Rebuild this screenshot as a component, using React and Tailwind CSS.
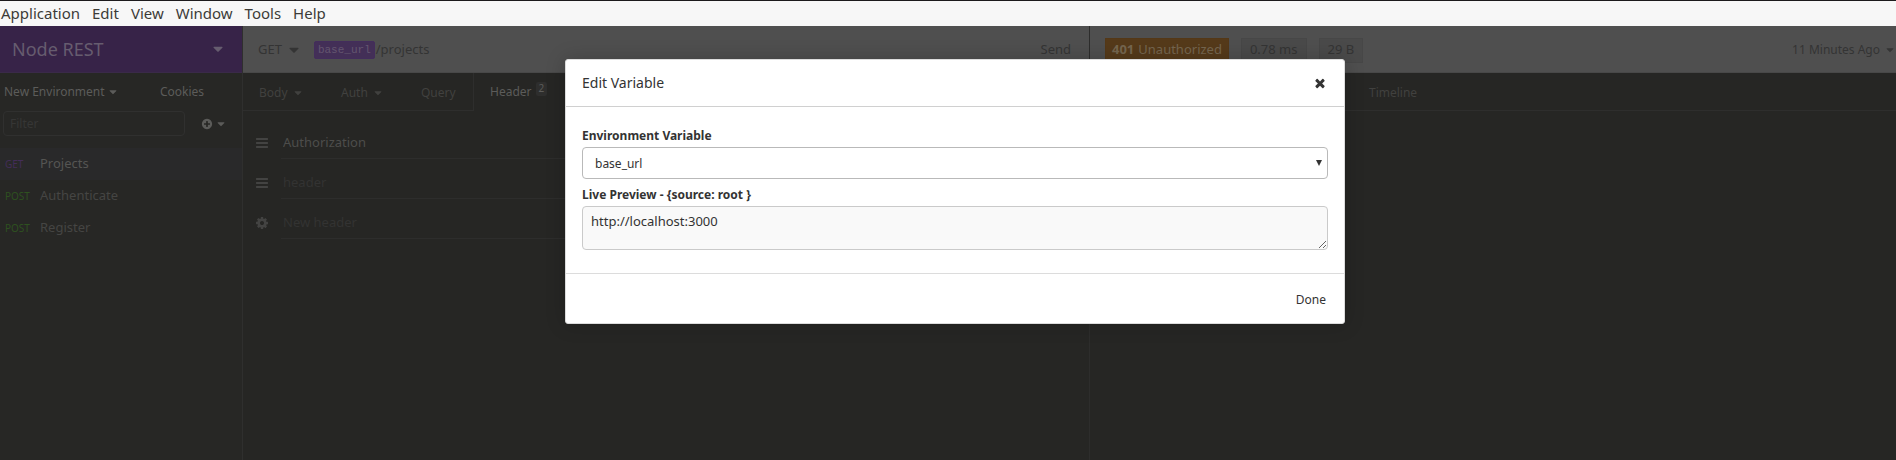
import React from "react";

const ICONS = {
  caret:
    "M1408 704q0 26-19 45l-448 448q-19 19-45 19t-45-19l-448-448q-19-19-19-45t19-45 45-19h896q26 0 45 19t19 45z",
  bars: "M1664 1344v128q0 26-19 45t-45 19h-1408q-26 0-45-19t-19-45v-128q0-26 19-45t45-19h1408q26 0 45 19t19 45zm0-512v128q0 26-19 45t-45 19h-1408q-26 0-45-19t-19-45v-128q0-26 19-45t45-19h1408q26 0 45 19t19 45zm0-512v128q0 26-19 45t-45 19h-1408q-26 0-45-19t-19-45v-128q0-26 19-45t45-19h1408q26 0 45 19t19 45z",
  cog: "M1152 896q0-106-75-181t-181-75-181 75-75 181 75 181 181 75 181-75 75-181zm512-109v222q0 12-8 23t-20 13l-185 28q-19 54-39 91 35 50 107 138 10 12 10 25t-9 23q-27 37-99 108t-94 71q-12 0-26-9l-138-108q-44 23-91 38-16 136-29 186-7 28-36 28h-222q-14 0-24.5-8.5t-11.5-21.5l-28-184q-49-16-90-37l-141 107q-10 9-25 9-14 0-25-11-126-114-165-168-7-10-7-23 0-12 8-23 15-21 51-66.5t54-70.5q-27-50-41-99l-183-27q-13-2-21-12.5t-8-23.5v-222q0-12 8-23t19-13l186-28q14-46 39-92-40-57-107-138-10-12-10-24 0-10 9-23 26-36 98.5-107.5t94.5-71.5q13 0 26 10l138 107q44-23 91-38 16-136 29-186 7-28 36-28h222q14 0 24.5 8.5t11.5 21.5l28 184q49 16 90 37l142-107q9-9 24-9 13 0 25 10 129 119 165 170 7 8 7 22 0 12-8 23-15 21-51 66.5t-54 70.5q26 50 41 98l183 28q13 2 21 12.5t8 23.5z",
  plus: "M1344 960v-128q0-26-19-45t-45-19h-256v-256q0-26-19-45t-45-19h-128q-26 0-45 19t-19 45v256h-256q-26 0-45 19t-19 45v128q0 26 19 45t45 19h256v256q0 26 19 45t45 19h128q26 0 45-19t19-45v-256h256q26 0 45-19t19-45zm320-64q0 209-103 385.5t-279.5 279.5-385.5 103-385.5-103-279.5-279.5-103-385.5 103-385.5 279.5-279.5 385.5-103 385.5 103 279.5 279.5 103 385.5z",
  times:
    "M1490 1322q0 40-28 68l-136 136q-28 28-68 28t-68-28l-294-294-294 294q-28 28-68 28t-68-28l-136-136q-28-28-28-68t28-68l294-294-294-294q-28-28-28-68t28-68l136-136q28-28 68-28t68 28l294 294 294-294q28-28 68-28t68 28l136 136q28 28 28 68t-28 68l-294 294 294 294q28 28 28 68z",
};

function Icon({ name, className = "size-3.5" }) {
  return (
    <svg viewBox="0 0 1792 1792" fill="currentColor" aria-hidden="true" className={`shrink-0 ${className}`}>
      <path d={ICONS[name]} />
    </svg>
  );
}

const MENUS = ["Application", "Edit", "View", "Window", "Tools", "Help"];

const REQUESTS = [
  { method: "GET", name: "Projects", active: true },
  { method: "POST", name: "Authenticate" },
  { method: "POST", name: "Register" },
];

function MenuBar() {
  return (
    <nav className="flex h-[26px] items-center gap-3 border-t border-[#1c1a1c] bg-[#f7f7f7] px-px text-[15px] text-[#3c3b37]">
      {MENUS.map((m) => (
        <button key={m}>{m}</button>
      ))}
    </nav>
  );
}

function Sidebar() {
  return (
    <aside className="border-r border-[#2f2f2e] bg-[#272725]">
      <button className="flex h-[47px] w-full items-center justify-between border-b border-[#3a2a49] bg-[#372348] pl-3 pr-4 text-lg text-[#665c6f]">
        Node REST
        <Icon name="caret" className="size-4" />
      </button>
      <div className="flex h-[38px] items-center justify-between pl-1 pr-[38px] text-xs text-[#5c5c5a]">
        <button className="flex items-center gap-0.5">
          New Environment
          <Icon name="caret" className="size-3" />
        </button>
        <button>Cookies</button>
      </div>
      <div className="flex h-[25px] items-center pl-[3px]">
        <input
          aria-label="Filter"
          placeholder="Filter"
          className="h-[25px] w-[182px] rounded-sm border border-[#30302f] bg-transparent px-1.5 text-xs placeholder:text-[#363635]"
        />
        <button aria-label="Create" className="ml-4 flex items-center gap-0.5 text-[#5b5b59]">
          <Icon name="plus" className="size-3" />
          <Icon name="caret" className="size-3" />
        </button>
      </div>
      <ul className="mt-3 text-[#454543]">
        {REQUESTS.map((r) => (
          <li key={r.name} className={r.active ? "bg-[#29292a] text-[#555553]" : ""}>
            <button className="flex h-8 w-full items-center pl-[5px] text-[13px]">
              <span
                className={
                  r.method === "GET"
                    ? "w-[35px] text-left text-[10px] text-[#432d58]"
                    : "w-[35px] text-left text-[10px] text-[#2e5120]"
                }
              >
                {r.method}
              </span>
              {r.name}
            </button>
          </li>
        ))}
      </ul>
    </aside>
  );
}

function HeaderRow({ icon, value, placeholder }) {
  return (
    <div className="flex h-10 items-stretch pl-3 text-[#434342]">
      <div className="flex items-center pt-2">
        <Icon name={icon} />
      </div>
      <div className="ml-3 flex flex-1 items-center border-b border-[#2d2d2c] pt-2">
        <input
          aria-label="Header name"
          defaultValue={value}
          placeholder={placeholder}
          className="w-full bg-transparent pl-0.5 text-[13px] text-[#4d4d4b] placeholder:text-[#333332]"
        />
      </div>
    </div>
  );
}

function RequestPane() {
  return (
    <section className="border-r border-[#2d2d2c] bg-[#262624]">
      <div className="flex h-[47px] items-center border-b border-[#484848] bg-[#4f4f4f] pl-[15px] pr-[18px] pt-0.5 text-[13px] text-[#343434]">
        <button className="flex items-center gap-1">
          GET
          <Icon name="caret" className="size-4" />
        </button>
        <div className="ml-3 flex flex-1 items-center">
          <span className="rounded-xs border border-[#432d5c] bg-[#432f57] px-[3px] font-['Liberation_Mono',monospace] text-[11px] text-[#64566f]">
            base_url
          </span>
          <span className="pl-px">/projects</span>
        </div>
        <button>Send</button>
      </div>
      <div className="flex h-[38px] text-xs text-[#41413f]">
        <button className="flex w-[82px] items-center gap-1 border-b border-[#2e2e2d] pl-4 pt-0.5">
          Body
          <Icon name="caret" className="size-3" />
        </button>
        <button className="flex w-20 items-center gap-1 border-b border-[#2e2e2d] pl-4 pt-0.5">
          Auth
          <Icon name="caret" className="size-3" />
        </button>
        <button className="flex w-[69px] items-center border-b border-r border-[#2e2e2d] pl-4 pt-0.5">
          Query
        </button>
        <button className="flex items-center gap-1 pl-4 text-[#5c5c5a]">
          Header
          <span className="mb-1.5 rounded-xs bg-[#2e2e2d] px-[3px] text-[10px]">2</span>
        </button>
      </div>
      <div className="pt-2">
        <HeaderRow icon="bars" value="Authorization" />
        <HeaderRow icon="bars" placeholder="header" />
        <HeaderRow icon="cog" placeholder="New header" />
      </div>
    </section>
  );
}

function ResponsePane() {
  return (
    <section className="bg-[#262624]">
      <div className="flex h-[47px] items-center gap-3 border-b border-[#484848] bg-[#4f4f4f] pl-[15px] pt-0.5 text-[13px] text-[#343434]">
        <div className="flex h-[25px] items-center gap-1 border border-[#543817] bg-[#553a1a] px-1.5 text-[#75664f]">
          <strong>401</strong> Unauthorized
        </div>
        <div className="flex h-[25px] items-center border border-[#474747] bg-[#4a4a4a] px-2">0.78 ms</div>
        <div className="flex h-[25px] items-center border border-[#474747] bg-[#4a4a4a] px-2">29 B</div>
        <button className="ml-auto flex items-center gap-1 text-xs">
          11 Minutes Ago
          <Icon name="caret" className="size-3" />
        </button>
      </div>
      <div className="flex h-[38px] items-center border-b border-[#2e2e2d] pl-[279px] pt-0.5 text-xs text-[#41413f]">
        <button>Timeline</button>
      </div>
    </section>
  );
}

function EditVariableDialog() {
  return (
    <div
      role="dialog"
      aria-labelledby="dialog-title"
      className="w-[780px] rounded-[3px] border border-[#dcdcdc] bg-white text-xs text-[#333] shadow-[0_0_20px_rgba(0,0,0,0.2)]"
    >
      <header className="flex h-[47px] items-center justify-between border-b border-[#d0d0d0] px-4">
        <h1 id="dialog-title" className="text-sm">
          Edit Variable
        </h1>
        <button aria-label="Close" className="pr-px">
          <Icon name="times" />
        </button>
      </header>
      <div className="px-4 pt-[21px] pb-[23px]">
        <label htmlFor="variable" className="block h-[19px] font-bold">
          Environment Variable
        </label>
        <div className="relative">
          <select
            id="variable"
            className="block h-8 w-full appearance-none rounded-sm border border-[#b9b9b9] bg-white px-3 pt-px"
          >
            <option>base_url</option>
          </select>
          <svg
            viewBox="0 0 6 6"
            fill="currentColor"
            aria-hidden="true"
            className="pointer-events-none absolute right-1.5 top-[13px] size-1.5"
          >
            <path d="M0 0h6L3 6z" />
          </svg>
        </div>
        <label htmlFor="preview" className="mt-2 block h-[19px] font-bold">
          Live Preview - {"{source: root }"}
        </label>
        <textarea
          id="preview"
          readOnly
          defaultValue="http://localhost:3000"
          className="block h-11 w-full rounded-sm border border-[#cacaca] bg-[#f9f9f9] px-2 py-1.5 text-[13px]"
        />
      </div>
      <footer className="flex h-[50px] items-center justify-end border-t border-[#dcdcdc] px-[18px] pt-0.5">
        <button>Done</button>
      </footer>
    </div>
  );
}

export default function App() {
  return (
    <div className="flex min-h-screen flex-col font-['Noto_Sans',sans-serif]">
      <MenuBar />
      <main className="relative grid flex-1 grid-cols-[243px_847fr_806fr]">
        <Sidebar />
        <RequestPane />
        <ResponsePane />
        <div className="absolute inset-0 flex items-start justify-center pl-3.5 pt-[33px]">
          <EditVariableDialog />
        </div>
      </main>
    </div>
  );
}
